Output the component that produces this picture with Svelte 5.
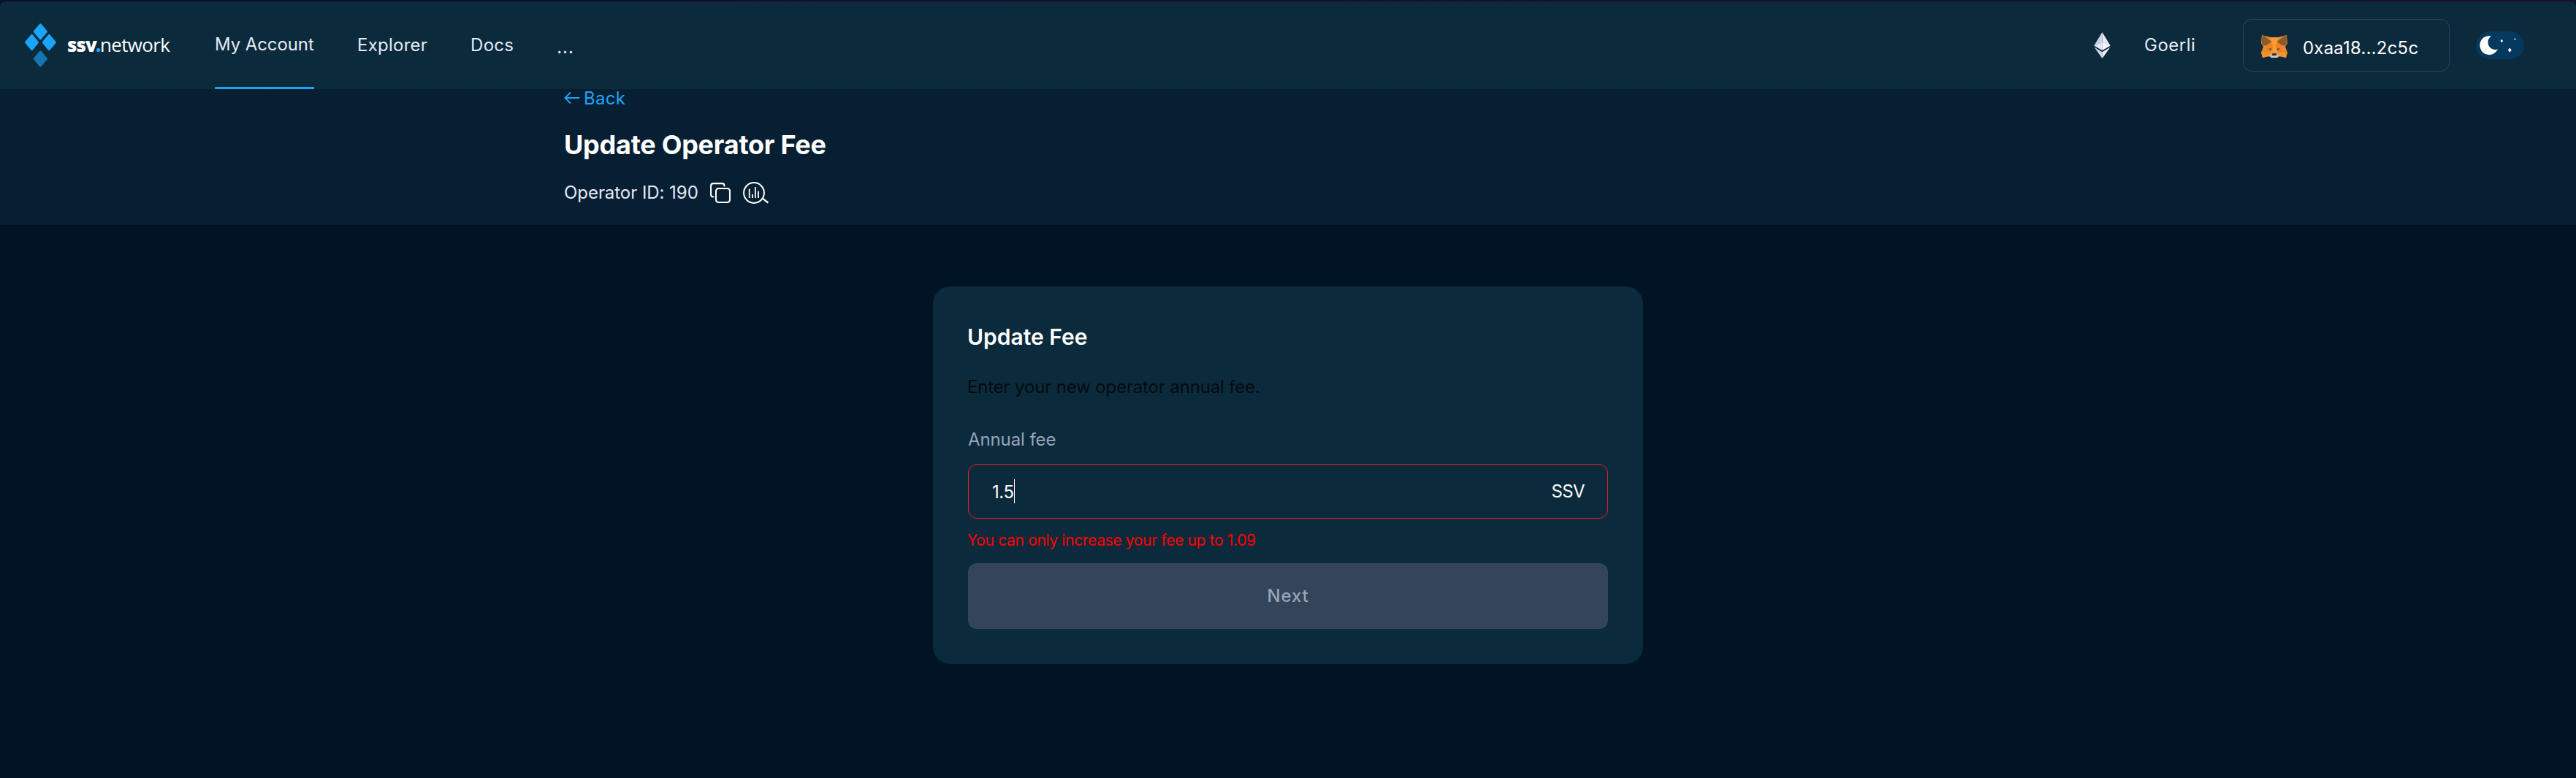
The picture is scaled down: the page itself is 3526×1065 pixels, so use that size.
<script>
  let fee = $state('1.5');
  const links = ['Explorer', 'Docs'];
</script>

<div class="page">
  <header>
    <div class="logo">
      <svg width="43" height="60" viewBox="0 0 43 60">
        <g fill="#1ba5f8" stroke="#1ba5f8" stroke-width="3" stroke-linejoin="round">
          <path d="M21.3 1.8 29.3 11.3 21.3 20.8 13.3 11.3Z" />
          <path d="M9.6 16.4 17.4 26 9.6 35.6 1.6 26Z" />
          <path d="M33.2 16.4 41.2 26 33.2 35.6 25.4 26Z" />
        </g>
        <path d="M21.3 39 29.3 48.5 21.3 58 13.3 48.5Z" fill="#1676b2" stroke="#1676b2" stroke-width="3" stroke-linejoin="round" />
      </svg>
      <div class="wordmark"><b>ssv</b><i>.</i><span>network</span></div>
    </div>
    <nav>
      <a class="active" href="#account">My Account</a>
      {#each links as link}<a href="#{link}">{link}</a>{/each}
      <a class="more" href="#more">...</a>
    </nav>
    <div class="network">
      <svg width="23" height="36" viewBox="0 0 23 36">
        <path d="M11.5 0 0.3 18.4 11.5 13.4Z" fill="#ced3ea" />
        <path d="M11.5 0 22.7 18.4 11.5 13.4Z" fill="#e6eaf7" />
        <path d="M0.3 18.4 11.5 13.4V25Z" fill="#e3e7f6" />
        <path d="M22.7 18.4 11.5 13.4V25Z" fill="#f8f9ff" />
        <path d="M0.5 20.6 11.5 27.2V36Z" fill="#ced3ea" />
        <path d="M22.5 20.6 11.5 27.2V36Z" fill="#f0f2fc" />
      </svg>
      <span>Goerli</span>
    </div>
    <div class="wallet">
      <svg width="36" height="32" viewBox="0 0 36 32">
        <path d="M1 1 13 4H23L35 1 36 12 33 17 36 25 34 32 24 30H12L2 32 0 25 3 17 0 12Z" fill="#f0892a" />
        <path d="M12.5 4.5H23.5L21.5 17 22.5 26H13.5L14.5 17Z" fill="#f99c35" />
        <path d="M2 0.5 14.5 10 6.5 15.5 2 15 0.5 9Z" fill="#8a5a30" />
        <path d="M34 0.5 21.5 10 29.5 15.5 34 15 35.5 9Z" fill="#8a5a30" />
        <path d="M14.5 10 16 18 15 23 9.5 22.5 5 18Z" fill="#ec8325" />
        <path d="M21.5 10 20 18 21 23 26.5 22.5 31 18Z" fill="#ec8325" />
        <path d="M0 23.5H12L11.5 29 2 32Z" fill="#f0932f" />
        <path d="M36 23.5H24L24.5 29 34 32Z" fill="#f0932f" />
        <path d="M1 23.3H13M23 23.3H35" stroke="#c9802f" stroke-width="0.7" />
        <path d="M10 20 13.5 19 14 22ZM26 20 22.5 19 22 22Z" fill="#4e4540" />
        <path d="M10.5 29.5 14 27H22L25.5 29.5 22 32H14Z" fill="#d3c4b8" />
        <path d="M15.5 26H20.5L21.5 29H14.5Z" fill="#303438" />
      </svg>
      <span>0xaa18...2c5c</span>
    </div>
    <svg class="toggle" width="66" height="38" viewBox="0 0 66 38">
      <rect width="66" height="38" rx="19" fill="#05395d" />
      <path d="M19.4 6A13 13 0 1 0 30 24.6C23 26.5 16.8 22 16.6 15.5 16.5 11 18 9 20 7.4 20.5 6.8 20.2 6.1 19.4 6Z" fill="#fff" />
      <path d="M35.3 11 36.7 13 35.3 15 33.9 13Z" fill="#fff" stroke="#fff" stroke-width="0.6" />
      <path d="M46.3 23.5 48 25.6 46.3 27.7 44.6 25.6Z" fill="#fff" stroke="#fff" stroke-width="1.2" stroke-linejoin="round" />
      <circle cx="53.5" cy="10.5" r="1.1" fill="#fff" />
    </svg>
  </header>

  <section class="heading">
    <a class="back" href="#back">
      <svg width="22" height="18" viewBox="0 0 22 18" fill="none" stroke="#1ba5f8" stroke-width="1.8">
        <path d="M21.5 9H1.5M9 1.5 1.5 9 9 16.5" />
      </svg>
      <span>Back</span>
    </a>
    <h1>Update Operator Fee</h1>
    <div class="operator">
      <span>Operator ID: 190</span>
      <svg width="28" height="28" viewBox="0 0 28 28" fill="none" stroke="#fff" stroke-width="2.1" stroke-linecap="round">
        <rect x="8" y="8" width="19" height="19" rx="3.5" />
        <path d="M4.500 19.500C2.200 19.500 1.100 18.500 1.100 16.500V4.500C1.100 2.200 2.200 1.100 4.500 1.100H16.500C18.500 1.100 19.500 2.200 19.500 4.500" />
      </svg>
      <svg width="36" height="30" viewBox="0 0 36 30" fill="none" stroke="#fff" stroke-width="2">
        <circle cx="15" cy="15" r="13.9" />
        <path d="M26.5 22.5 34.5 28.5" stroke-width="2.2" />
        <path d="M8.700 9.500V22M12.900 17V22M16.900 7V22M21 12.500V22" stroke-width="1.8" />
      </svg>
    </div>
  </section>

  <main>
    <div class="card">
      <h2>Update Fee</h2>
      <p class="hint">Enter your new operator annual fee.</p>
      <div class="label">Annual fee</div>
      <div class="field">
        <div class="value"><span>{fee}</span><i></i></div>
        <span class="unit">SSV</span>
      </div>
      <p class="error">You can only increase your fee up to 1.09</p>
      <button disabled>Next</button>
    </div>
  </main>
</div>

<style>
  :global(body) { background: #001425; }
  .page {
    min-height: 1065px;
    box-sizing: border-box;
    padding-top: 2px;
    background: linear-gradient(90deg, #0d0e2c, #1b0e2b) 0 0 / 100% 12px no-repeat, #001425;
    font-family: Inter, sans-serif;
    font-size: 24px;
    line-height: 30px;
    color: #e6eaf7;
  }
  a { color: inherit; text-decoration: none; }
  h1, h2, p { margin: 0; }
  svg { display: block; flex: none; }
  header {
    height: 120px;
    box-sizing: border-box;
    padding: 0 71px 0 34px;
    display: flex;
    align-items: center;
    background: #0b2a3c;
    border-radius: 7px 7px 0 0;
  }
  .logo { display: flex; align-items: center; gap: 15px; width: 260px; }
  .wordmark {
    font-family: "Open Sans", sans-serif;
    font-size: 26px;
    line-height: 36px;
    color: #fff;
    display: flex;
    padding-bottom: 3px;
  }
  .wordmark b { font-weight: 800; letter-spacing: -0.9px; width: 39px; }
  .wordmark i { font-style: normal; font-weight: 800; color: #1ba5f8; width: 6px; }
  .wordmark span { font-weight: 400; letter-spacing: -0.65px; }
  nav { display: flex; gap: 59px; }
  nav a { line-height: 120px; height: 120px; letter-spacing: 0.25px; }
  nav .active {
    box-sizing: border-box;
    width: 136px;
    white-space: nowrap;
    line-height: 117px;
    letter-spacing: -0.1px;
    border-bottom: 3px solid #1ba5f8;
  }
  nav .more { line-height: 126px; letter-spacing: 1px; }
  .network { display: flex; align-items: center; gap: 46px; width: 204px; margin-left: auto; letter-spacing: 0.5px; }
  .wallet {
    width: 283px;
    height: 72px;
    box-sizing: border-box;
    border: 1px solid #2f4359;
    border-radius: 12px;
    padding-left: 24px;
    display: flex;
    align-items: center;
    gap: 21px;
    color: #fff;
    letter-spacing: 0.2px;
  }
  .wallet svg { margin-top: 2px; }
  .wallet span { padding-top: 8px; }
  .toggle { margin-left: 36px; }
  .heading {
    height: 186px;
    box-sizing: border-box;
    padding-left: 772px;
    background: linear-gradient(#061f30, #071f33 14px);
  }
  .back { display: flex; align-items: flex-start; gap: 5px; line-height: 26px; color: #1ba5f8; letter-spacing: 0.3px; }
  .back svg { margin-top: 3px; }
  h1 { margin-top: 28px; font-size: 36px; line-height: 44px; font-weight: 700; letter-spacing: -0.25px; color: #fff; }
  .operator { margin-top: 29px; display: flex; align-items: center; gap: 17px; }
  .operator span { width: 183px; white-space: nowrap; letter-spacing: -0.05px; }
  .card {
    width: 972px;
    box-sizing: border-box;
    margin: 84px auto 0;
    padding: 50px 48px 48px;
    border-radius: 24px;
    background: #0b2a3c;
  }
  h2 { font-size: 30px; line-height: 38px; font-weight: 600; color: #fff; margin-left: -1px; }
  .hint { margin-top: 35px; margin-left: -1px; letter-spacing: -0.15px; color: #040a0f; }
  .label { margin-top: 42px; letter-spacing: -0.1px; color: #97a5ba; }
  .field {
    margin-top: 18px;
    height: 75px;
    box-sizing: border-box;
    border: 1px solid #ec1c26;
    border-radius: 12px;
    padding: 0 31px 0 32px;
    display: flex;
    align-items: center;
    justify-content: space-between;
    color: #fdfefe;
  }
  .value { display: flex; align-items: center; letter-spacing: -0.4px; }
  .value span { padding-top: 3px; }
  .value i { width: 1px; height: 33px; background: #fff; }
  .unit { letter-spacing: -0.6px; }
  .error { margin-top: 17px; margin-left: -1px; font-size: 21px; line-height: 26px; letter-spacing: -0.34px; color: #f00; }
  button {
    display: block;
    width: 100%;
    height: 90px;
    margin-top: 18px;
    padding: 0;
    border: 0;
    border-radius: 12px;
    background: #34455a;
    color: #97a5ba;
    font: 500 24px/30px Inter, sans-serif;
    letter-spacing: 0.8px;
  }
</style>
